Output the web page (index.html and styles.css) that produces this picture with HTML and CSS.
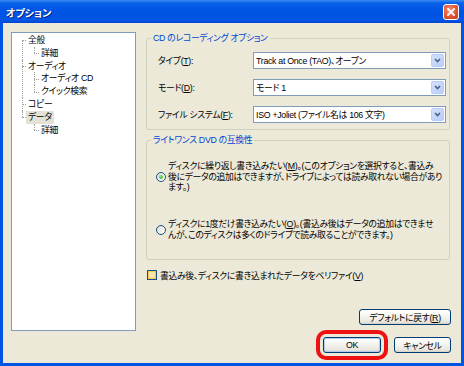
FILE: index.html
```html
<!DOCTYPE html>
<html lang="ja">
<head>
  <meta charset="UTF-8">
  <title>オプション</title>
  <link rel="stylesheet" href="styles.css">
</head>
<body>

<div class="window">
  <div class="titlebar">
    <span class="title">オプション</span>
    <span class="close-btn">
      <svg width="8" height="8" viewBox="0 0 8 8"><path d="M1 1L7 7M7 1L1 7" stroke="#fff" stroke-width="1.8" stroke-linecap="square"/></svg>
    </span>
  </div>

  <div class="client">
    <ul class="tree">
      <li><span>全般</span>
        <ul>
          <li><span>詳細</span></li>
        </ul>
      </li>
      <li><span>オーディオ</span>
        <ul>
          <li><span>オーディオ CD</span></li>
          <li><span>クイック検索</span></li>
        </ul>
      </li>
      <li><span>コピー</span></li>
      <li><span class="selected">データ</span>
        <ul>
          <li><span>詳細</span></li>
        </ul>
      </li>
    </ul>

    <div class="panel">
      <fieldset class="group">
        <legend>CD のレコーディング オプション</legend>
        <div class="group-body fields">
          <label>タイプ(<u>T</u>):</label>
          <div class="combo"><span class="combo-text">Track at Once (TAO)、オープン</span><span class="drop"><svg width="7" height="5" viewBox="0 0 7 5"><path d="M1 1L3.5 3.5L6 1" fill="none" stroke="#4D6185" stroke-width="1.6"/></svg></span></div>
          <label>モード(<u>D</u>):</label>
          <div class="combo"><span class="combo-text">モード 1</span><span class="drop"><svg width="7" height="5" viewBox="0 0 7 5"><path d="M1 1L3.5 3.5L6 1" fill="none" stroke="#4D6185" stroke-width="1.6"/></svg></span></div>
          <label>ファイル システム(<u>F</u>):</label>
          <div class="combo"><span class="combo-text">ISO +Joliet (ファイル名は 106 文字)</span><span class="drop"><svg width="7" height="5" viewBox="0 0 7 5"><path d="M1 1L3.5 3.5L6 1" fill="none" stroke="#4D6185" stroke-width="1.6"/></svg></span></div>
        </div>
      </fieldset>

      <fieldset class="group group-dvd">
        <legend>ライトワンス DVD の互換性</legend>
        <div class="group-body options">
          <div class="option">
            <span class="radio checked"></span>
            <p>ディスクに繰り返し書き込みたい(<u>M</u>)。(このオプションを選択すると、書込み<br>後にデータの追加はできますが、ドライブによっては読み取れない場合があり<br>ます。)</p>
          </div>
          <div class="option">
            <span class="radio"></span>
            <p>ディスクに1度だけ書き込みたい(<u>O</u>)。(書込み後はデータの追加はできませ<br>んが、このディスクは多くのドライブで読み取ることができます。)</p>
          </div>
        </div>
      </fieldset>

      <div class="check-row">
        <span class="checkbox"></span>
        <span>書込み後、ディスクに書き込まれたデータをベリファイ(<u>V</u>)</span>
      </div>

      <div class="reset-row">
        <button class="btn btn-reset">デフォルトに戻す(<u>R</u>)</button>
      </div>

      <div class="action-row">
        <button class="btn btn-ok">OK</button>
        <button class="btn btn-cancel">キャンセル</button>
      </div>
    </div>
  </div>
</div>

</body>
</html>
```

FILE: styles.css
```css
/* XP style dialog */
body {
  margin: 0;
  font-family: "Liberation Sans", "Noto Sans CJK JP", sans-serif;
  font-size: 8.8px;
  letter-spacing: -0.3px;
  font-feature-settings: "palt";
  color: #000000;
  background-color: #0054E3;
}
u {
  text-decoration: underline;
}
.window {
  width: 464px;
  height: 366px;
  display: flex;
  flex-direction: column;
  background-color: #0054E3;
}
.titlebar {
  height: 23px;
  flex: none;
  display: flex;
  align-items: center;
  justify-content: space-between;
  padding: 0 5px 0 6px;
  background: linear-gradient(to bottom, #3C8CF3 0, #0A62EA 3px, #0055E5 10px, #0053E1 16px, #0458E6 20px, #0043CF 23px);
}
.title {
  color: #ffffff;
  font-weight: bold;
  font-size: 10px;
  letter-spacing: 0;
  text-shadow: 1px 1px 0 #0A1E8A;
  padding-top: 1px;
}
.close-btn {
  width: 16px;
  height: 16px;
  box-sizing: border-box;
  border: 1px solid #ffffff;
  border-radius: 3px;
  background: radial-gradient(circle at 40% 35%, #F4927A, #E0512C 60%, #C8391C);
  display: flex;
  align-items: center;
  justify-content: center;
}
.client {
  flex: 1;
  margin: 0 3px 3px 3px;
  background-color: #ECE9D8;
  display: flex;
  align-items: flex-start;
  padding: 9px 10px 0 8px;
}

/* tree */
.tree {
  width: 125px;
  height: 299px;
  box-sizing: border-box;
  margin: 0;
  padding: 1px 0 0 0;
  list-style: none;
  background-color: #ffffff;
  border: 1px solid #7F9DB9;
  flex: none;
}
.tree ul {
  margin: 0;
  padding: 0;
  list-style: none;
}
.tree li {
  position: relative;
}
.tree li span {
  display: inline-block;
  height: 12.8px;
  line-height: 12.8px;
  padding: 0 2px;
}
.tree li span.selected {
  background-color: #E4E2D6;
}
.tree > li {
  padding-left: 14px;
}
.tree > li::before {
  content: '';
  position: absolute;
  left: 10px;
  top: 0;
  bottom: 0;
  border-left: 1px dotted #A0A0A0;
}
.tree > li:first-child::before {
  top: 6px;
}
.tree > li:last-child::before {
  bottom: auto;
  height: 6.4px;
}
.tree > li::after {
  content: '';
  position: absolute;
  left: 10px;
  top: 6.4px;
  width: 4px;
  border-top: 1px dotted #A0A0A0;
}
.tree ul li {
  padding-left: 13px;
}
.tree ul li::before {
  content: '';
  position: absolute;
  left: 8px;
  top: 0;
  bottom: 0;
  border-left: 1px dotted #A0A0A0;
}
.tree ul li:last-child::before {
  bottom: auto;
  height: 6.4px;
}
.tree ul li::after {
  content: '';
  position: absolute;
  left: 8px;
  top: 6.4px;
  width: 5px;
  border-top: 1px dotted #A0A0A0;
}

/* right panel */
.panel {
  width: 305px;
  margin-left: 10px;
  display: flex;
  flex-direction: column;
}
.group {
  margin: 0;
  padding: 0;
  width: 304px;
  box-sizing: border-box;
  border: 1px solid #D0D0BF;
  border-radius: 3px;
  min-width: 0;
}
.group legend {
  margin-left: 4px;
  padding: 0 2px;
  line-height: 12px;
  color: #0046D5;
}
.group-dvd {
  margin-top: 4px;
}
.group-body {
  padding: 8px 3px 6px 11px;
}
.fields {
  display: grid;
  grid-template-columns: 95px 193px;
  row-gap: 10px;
  align-items: center;
}
.combo {
  height: 17px;
  box-sizing: border-box;
  border: 1px solid #7F9DB9;
  background-color: #ffffff;
  display: flex;
  align-items: center;
}
.combo-text {
  flex: 1;
  padding-left: 2px;
  white-space: nowrap;
}
.drop {
  width: 13px;
  height: 13px;
  margin-right: 1px;
  box-sizing: border-box;
  border: 1px solid #B9CCF6;
  border-radius: 2px;
  background: linear-gradient(135deg, #D6E2FC, #B8CCF7);
  display: flex;
  align-items: center;
  justify-content: center;
}

.options {
  padding: 15px 11px 19px 9px;
  display: flex;
  flex-direction: column;
  gap: 26.5px;
}
.option {
  display: flex;
  align-items: center;
  gap: 2px;
}
.option p {
  margin: 0;
  line-height: 10.5px;
  white-space: nowrap;
}
.radio {
  width: 10px;
  height: 10px;
  flex: none;
  box-sizing: border-box;
  border: 1px solid #1C5180;
  border-radius: 50%;
  background: linear-gradient(135deg, #DCDBD5, #ffffff);
  position: relative;
}
.radio.checked::after {
  content: '';
  position: absolute;
  left: 2px;
  top: 2px;
  width: 4px;
  height: 4px;
  border-radius: 50%;
  background: radial-gradient(circle at 35% 35%, #8AE88A, #21A121);
}

.check-row {
  margin: 10px 0 0 1px;
  height: 10px;
  display: flex;
  align-items: center;
  gap: 3px;
  white-space: nowrap;
}
.checkbox {
  width: 10px;
  height: 10px;
  flex: none;
  box-sizing: border-box;
  border: 1px solid #1C5180;
  background-color: #FBE6A8;
  box-shadow: inset 0 0 0 1px #F5C45C;
}

.reset-row {
  margin-top: 29px;
  display: flex;
  justify-content: flex-end;
}
.action-row {
  margin-top: 12px;
  display: flex;
  justify-content: flex-end;
  gap: 13px;
}
.btn {
  height: 16px;
  padding: 0;
  font: inherit;
  letter-spacing: inherit;
  color: #000000;
  border: 1px solid #003C74;
  border-radius: 3px;
  background: linear-gradient(to bottom, #ffffff 0, #F4F4F0 45%, #E8E6DE 85%, #D6D0C5 100%);
  cursor: pointer;
}
.btn-reset {
  width: 92px;
}
.btn-ok {
  width: 58px;
  box-shadow: inset 0 0 0 1px #B4CCF2;
  outline: 4px solid #EE1111;
  outline-offset: 3px;
}
.btn-cancel {
  width: 57px;
}
```
